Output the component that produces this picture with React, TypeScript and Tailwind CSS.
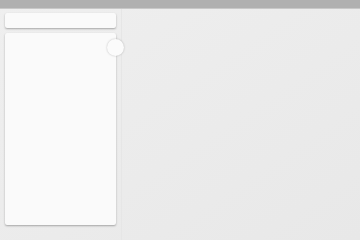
export default function App() {
  return (
    <div className="flex h-[240px] w-[360px] flex-col overflow-hidden bg-gradient-to-br from-[#efefef] to-[#e8e8e8] font-['Liberation_Sans',sans-serif]">
      <div className="h-[9px] shrink-0 border-b border-[#c8c8c8] bg-[#b0b0b0]" />
      <div className="flex flex-1">
        <aside className="w-[122px] shrink-0 border-r border-[#e6e6e6] px-[5px] pt-[4px]">
          <div className="h-[15px] rounded-[2px] bg-[#fafafa] shadow-[0_1px_2px_rgba(0,0,0,0.3)]" />
          <div className="relative mt-[5px] h-[192px] rounded-[2px] bg-[#fafafa] shadow-[0_1px_2px_rgba(0,0,0,0.3)]">
            <div className="absolute -right-[8px] top-[6px] h-[17px] w-[17px] rounded-full bg-[#fbfbfb] shadow-[0_0_2px_rgba(0,0,0,0.25)]" />
          </div>
        </aside>
        <main className="flex-1" />
      </div>
    </div>
  );
}
